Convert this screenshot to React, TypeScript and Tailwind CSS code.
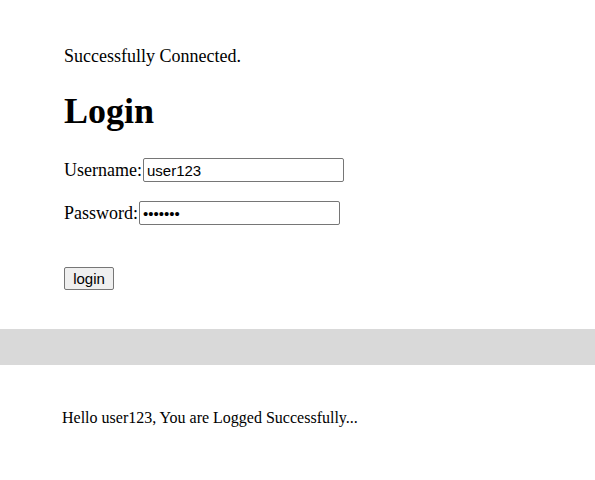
export default function App() {
  return (
    <div className="min-h-[480px] bg-white text-black font-['Liberation_Serif',serif]">
      <section className="px-16 pt-[46px] pb-[38px]">
        <p className="text-[18px] leading-[21px]">Successfully Connected.</p>
        <h1 className="mt-[24px] text-[36px] font-bold leading-[41px]">Login</h1>

        <div className="mt-[26px] flex items-center text-[18px] leading-[21px]">
          <span>Username:</span>
          <input
            type="text"
            defaultValue="user123"
            className="ml-px h-[24px] w-[201px] rounded-[2px] border border-[#767676] bg-white px-[3px] font-['Liberation_Sans',Arial,sans-serif] text-[15px] text-black outline-none"
          />
        </div>

        <div className="mt-[19px] flex items-center text-[18px] leading-[21px]">
          <span>Password:</span>
          <input
            type="password"
            defaultValue="1234567"
            className="ml-px h-[24px] w-[201px] rounded-[2px] border border-[#767676] bg-white px-[3px] font-['Liberation_Sans',Arial,sans-serif] text-[15px] text-black outline-none"
          />
        </div>

        <button className="mt-[42px] h-[23px] w-[50px] rounded-[2px] border border-[#767676] bg-[#efefef] font-['Liberation_Sans',Arial,sans-serif] text-[15px] leading-[18px] text-black">
          login
        </button>
      </section>

      <div className="h-[36px] w-full bg-[#d9d9d9]" />

      <section className="px-[62px] pt-[44px]">
        <p className="text-[16px] leading-[18px]">Hello user123, You are Logged Successfully...</p>
      </section>
    </div>
  );
}
